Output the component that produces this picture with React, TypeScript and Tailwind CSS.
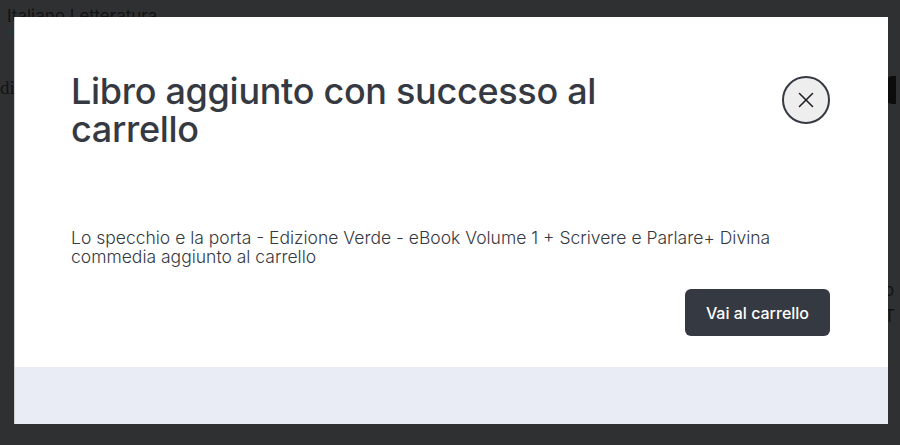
import React from "react";
import { X } from "lucide-react";

const font = { fontFamily: "Inter, 'Noto Sans', sans-serif" };

export default function App() {
  return (
    <div className="relative w-[900px] h-[445px] overflow-hidden bg-[#2f3032]" style={font}>
      {/* page behind the overlay */}
      <div className="absolute left-[7px] top-[4px] text-[17px] text-[#121314]">
        Italiano Letteratura
        <div className="h-[2px] w-[24px] bg-[#1f3a3c] mt-[1px]" />
      </div>
      <div className="absolute left-0 top-[74px] text-[19px] text-[#121314]" style={{ fontFamily: "'Liberation Serif', serif" }}>
        di
      </div>
      <div className="absolute left-[886px] top-[76px] w-[10px] h-[28px] rounded-l-[6px] bg-[#0c0c0c]" />
      <div className="absolute left-[884px] top-[278px] text-[17px] text-[#121314]">o T</div>

      {/* modal */}
      <div className="absolute left-[14px] top-[17px] w-[874px] h-[407px] bg-white border-l border-[#cfd0d2] flex flex-col">
        <div className="flex-1 flex flex-col pl-[56px] pr-[58px] pt-[55px]">
          <div className="flex items-start justify-between">
            <h1 className="text-[36px] leading-[38px] font-medium text-[#353942] w-[560px] tracking-[-0.3px]">
              Libro aggiunto con successo al carrello
            </h1>
            <button className="mt-[4px] w-[48px] h-[48px] rounded-full border-2 border-[#353942] bg-[#eeeeee] flex items-center justify-center text-[#202226]">
              <X size={26} strokeWidth={1.4} />
            </button>
          </div>
          <p className="mt-[80px] text-[17.5px] leading-[19px] font-light text-[#353942]">
            Lo specchio e la porta - Edizione Verde - eBook Volume 1 + Scrivere e Parlare+ Divina commedia aggiunto al carrello
          </p>
          <div className="flex justify-end mt-[23px]">
            <button className="h-[47px] px-[21px] rounded-[6px] bg-[#353942] text-white text-[16px] font-medium">
              Vai al carrello
            </button>
          </div>
        </div>
        <div className="h-[57px] bg-[#e9ecf4]" />
      </div>
    </div>
  );
}
